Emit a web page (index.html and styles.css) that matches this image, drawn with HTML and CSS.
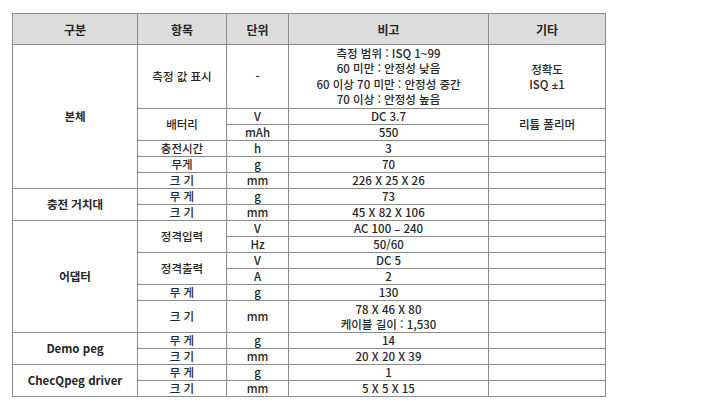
FILE: index.html
```html
<!DOCTYPE html>
<html lang="ko">
<head>
<meta charset="utf-8">
<link rel="stylesheet" href="styles.css">
</head>
<body>
<div class="page">
<table class="spec">
  <colgroup>
    <col class="c1"><col class="c2"><col class="c3"><col class="c4"><col class="c5">
  </colgroup>
  <thead>
    <tr class="head"><th>구분</th><th>항목</th><th>단위</th><th>비고</th><th>기타</th></tr>
  </thead>
  <tbody>
    <tr class="tall4"><td class="cat" rowspan="6">본체</td><td>측정 값 표시</td><td>-</td><td class="multi">측정 범위 : ISQ 1<span class="sym">~</span>99<br>60 미만 : 안정성 낮음<br>60 이상 70 미만 : 안정성 중간<br>70 이상 : 안정성 높음</td><td>정확도<br>ISQ <span class="sym">±</span>1</td></tr>
    <tr><td rowspan="2">배터리</td><td>V</td><td>DC 3.7</td><td rowspan="2">리튬 폴리머</td></tr>
    <tr><td>mAh</td><td>550</td></tr>
    <tr><td>충전시간</td><td>h</td><td>3</td><td></td></tr>
    <tr><td>무게</td><td>g</td><td>70</td><td></td></tr>
    <tr><td>크 기</td><td>mm</td><td>226 X 25 X 26</td><td></td></tr>
    <tr><td class="cat" rowspan="2">충전 거치대</td><td>무 게</td><td>g</td><td>73</td><td></td></tr>
    <tr><td>크 기</td><td>mm</td><td>45 X 82 X 106</td><td></td></tr>
    <tr><td class="cat" rowspan="6">어댑터</td><td rowspan="2">정격입력</td><td>V</td><td>AC 100 <span class="sym">–</span> 240</td><td></td></tr>
    <tr><td>Hz</td><td>50/60</td><td></td></tr>
    <tr><td rowspan="2">정격출력</td><td>V</td><td>DC 5</td><td></td></tr>
    <tr><td>A</td><td>2</td><td></td></tr>
    <tr><td>무 게</td><td>g</td><td>130</td><td></td></tr>
    <tr class="tall2"><td>크 기</td><td>mm</td><td>78 X 46 X 80<br>케이블 길이 : 1,530</td><td></td></tr>
    <tr><td class="cat" rowspan="2">Demo peg</td><td>무 게</td><td>g</td><td>14</td><td></td></tr>
    <tr><td>크 기</td><td>mm</td><td>20 X 20 X 39</td><td></td></tr>
    <tr><td class="cat" rowspan="2">ChecQpeg driver</td><td>무 게</td><td>g</td><td>1</td><td></td></tr>
    <tr><td>크 기</td><td>mm</td><td>5 X 5 X 15</td><td></td></tr>
  </tbody>
</table>
</div>
</body>
</html>
```

FILE: styles.css
```css
html, body {
  margin: 0;
  padding: 0;
  background: #ffffff;
}

.page {
  padding: 13px 0 0 12px;
}

.spec {
  border-collapse: collapse;
  table-layout: fixed;
  width: 593px;
  font-family: "Noto Sans CJK KR", "Noto Sans", sans-serif;
  font-size: 11.5px;
  font-weight: 500;
  color: #262626;
}

.c1 { width: 125px; }
.c2 { width: 89px; }
.c3 { width: 62px; }
.c4 { width: 200px; }
.c5 { width: 117px; }

.spec th,
.spec td {
  border: 1px solid #8c8c8c;
  padding: 0;
  text-align: center;
  vertical-align: middle;
  line-height: 15px;
  white-space: nowrap;
}

.spec tr {
  height: 16px;
}

.spec tr.head {
  height: 31px;
}

.spec th {
  background: #dcdcdc;
  font-weight: 700;
  font-size: 12px;
}

.spec tr.tall4 {
  height: 64px;
}

.spec td.multi {
  line-height: 15.5px;
}

.spec tr.tall2 {
  height: 32px;
}

.spec td.cat {
  font-weight: 700;
}

.sym {
  font-family: "Noto Sans", "DejaVu Sans", sans-serif;
}
```
